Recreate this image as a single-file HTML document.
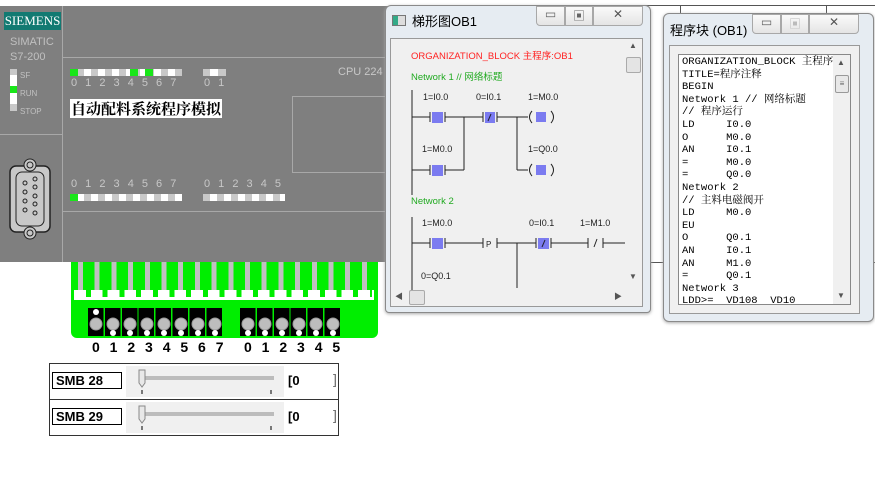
<!DOCTYPE html>
<html><head><meta charset="utf-8"><style>
*{margin:0;padding:0;box-sizing:border-box}
body{width:875px;height:486px;background:#fff;position:relative;overflow:hidden;font-family:"Liberation Sans","Noto Sans CJK SC",sans-serif}
.a{position:absolute}
.led{position:absolute;height:7px}
.dg{position:absolute;color:#c8c8c8;font-size:11px;letter-spacing:0;word-spacing:5px}
.btn{position:absolute;border:1px solid #a8a8a8;background:linear-gradient(#fafafa,#e4e4e4);color:#666;font-size:12px;text-align:center}
.mono{font-family:"Liberation Mono","Noto Serif CJK SC",monospace;font-size:10.5px;line-height:12.6px;color:#000;white-space:pre}
</style></head><body>

<div class="a" style="left:640px;top:5px;width:235px;height:1px;background:#555"></div>
<div class="a" style="left:600px;top:262px;width:275px;height:1px;background:#555"></div>
<div class="a" style="left:680px;top:5px;width:1px;height:10px;background:#555"></div>
<div class="a" style="left:826px;top:5px;width:1px;height:10px;background:#555"></div>

<div class="a" style="left:0;top:6px;width:388px;height:256px;background:#7f7f7f"></div>
<div class="a" style="left:62px;top:6px;width:1px;height:256px;background:#a8a8a8"></div>
<div class="a" style="left:0;top:134px;width:62px;height:1px;background:#a8a8a8"></div>
<div class="a" style="left:63px;top:57px;width:325px;height:1px;background:#a8a8a8"></div>
<div class="a" style="left:63px;top:211px;width:325px;height:1px;background:#a8a8a8"></div>
<div class="a" style="left:292px;top:96px;width:96px;height:77px;border:1px solid #a8a8a8;border-right:none"></div>
<div class="a" style="left:4px;top:12px;width:57px;height:18px;background:#127a72;color:#fff;font-family:'Liberation Serif',serif;font-size:13px;line-height:18px;text-align:center">SIEMENS</div>
<div class="a" style="left:10px;top:35px;color:#c0c0c0;font-size:11px;line-height:15px">SIMATIC<br>S7-200</div>
<div class="a" style="left:10px;top:69px;width:7px;height:42px;background:#fff"></div>
<div class="a" style="left:10px;top:69px;width:7px;height:6px;background:#c8c8c8"></div>
<div class="a" style="left:10px;top:86px;width:7px;height:7px;background:#19e619"></div>
<div class="a" style="left:10px;top:104px;width:7px;height:7px;background:#c8c8c8"></div>
<div class="a" style="left:20px;top:67px;color:#c0c0c0;font-size:8px;line-height:18px">SF<br>RUN<br>STOP</div>
<svg class="a" style="left:8px;top:158px" width="46" height="82"><rect x="2" y="8" width="40" height="66" rx="6" fill="#c8c8c8" stroke="#222" stroke-width="1.5"/><circle cx="22" cy="7" r="6" fill="#c8c8c8" stroke="#222"/><circle cx="22" cy="7" r="3" fill="none" stroke="#222"/><circle cx="22" cy="75" r="6" fill="#c8c8c8" stroke="#222"/><circle cx="22" cy="75" r="3" fill="none" stroke="#222"/><rect x="8" y="14" width="28" height="54" rx="6" fill="#c8c8c8" stroke="#222"/><g fill="none" stroke="#222"><circle cx="17" cy="25" r="2"/><circle cx="17" cy="34" r="2"/><circle cx="17" cy="43" r="2"/><circle cx="17" cy="52" r="2"/><circle cx="27" cy="21" r="2"/><circle cx="27" cy="29" r="2"/><circle cx="27" cy="38" r="2"/><circle cx="27" cy="46" r="2"/><circle cx="27" cy="55" r="2"/></g></svg>

<div class="a" style="left:70px;top:69px;width:112px;height:7px;background:repeating-linear-gradient(90deg,#fff 0 7px,#c8c8c8 7px 14px)"></div>
<div class="led" style="left:70px;top:69px;width:8px;background:#19e619"></div>
<div class="led" style="left:130px;top:69px;width:8px;background:#19e619"></div>
<div class="led" style="left:145px;top:69px;width:8px;background:#19e619"></div>
<div class="a" style="left:203px;top:69px;width:23px;height:7px;background:linear-gradient(90deg,#c8c8c8 0 7px,#fff 7px 15px,#c8c8c8 15px)"></div>
<div class="dg" style="left:71px;top:77px">0 1 2 3 4 5 6 7</div>
<div class="dg" style="left:204px;top:77px">0 1</div>
<div class="a" style="left:338px;top:66px;color:#c8c8c8;font-size:11px">CPU 224</div>
<div class="a" style="left:70px;top:99px;background:#fff;color:#000;font-family:'Noto Serif CJK SC',serif;font-weight:bold;font-size:15px;line-height:19px;padding:0 1px">自动配料系统程序模拟</div>
<div class="dg" style="left:71px;top:178px">0 1 2 3 4 5 6 7</div>
<div class="dg" style="left:204px;top:178px">0 1 2 3 4 5</div>
<div class="a" style="left:70px;top:194px;width:112px;height:7px;background:repeating-linear-gradient(90deg,#c8c8c8 0 7px,#fff 7px 14px)"></div>
<div class="led" style="left:70px;top:194px;width:8px;background:#19e619"></div>
<div class="a" style="left:203px;top:194px;width:82px;height:7px;background:repeating-linear-gradient(90deg,#c8c8c8 0 7px,#fff 7px 14px)"></div>

<div class="a" style="left:71px;top:262px;width:307px;height:76px;background:#00ee00;border-radius:0 0 6px 6px"></div>
<div class="a" style="left:78px;top:262px;width:292px;height:29px;background:repeating-linear-gradient(90deg,#c0c0c0 0 5px,transparent 5px 16.7px)"></div>
<div class="a" style="left:74px;top:290px;width:300px;height:10px;background:#fff"></div>
<div class="a" style="left:86px;top:290px;width:286px;height:7px;background:repeating-linear-gradient(90deg,#00ee00 0 5px,transparent 5px 16.7px)"></div>
<div class="a" style="left:88px;top:308px;width:135px;height:28px;background:repeating-linear-gradient(90deg,#000 0 15.5px,#00ee00 15.5px 16.9px)"></div>
<div class="a" style="left:240px;top:308px;width:101px;height:28px;background:repeating-linear-gradient(90deg,#000 0 15.5px,#00ee00 15.5px 16.9px)"></div>
<svg class="a" style="left:88px;top:308px" width="260" height="28">
<g fill="#bdbdbd" stroke="#999">
<circle cx="8" cy="16" r="6"/><circle cx="25" cy="16" r="6"/><circle cx="42" cy="16" r="6"/><circle cx="59" cy="16" r="6"/><circle cx="76" cy="16" r="6"/><circle cx="93" cy="16" r="6"/><circle cx="110" cy="16" r="6"/><circle cx="127" cy="16" r="6"/>
<circle cx="160" cy="16" r="6"/><circle cx="177" cy="16" r="6"/><circle cx="194" cy="16" r="6"/><circle cx="211" cy="16" r="6"/><circle cx="228" cy="16" r="6"/><circle cx="245" cy="16" r="6"/></g>
<g fill="#fff"><circle cx="8" cy="4" r="3"/><circle cx="25" cy="25" r="3"/><circle cx="42" cy="25" r="3"/><circle cx="59" cy="25" r="3"/><circle cx="76" cy="25" r="3"/><circle cx="93" cy="25" r="3"/><circle cx="110" cy="25" r="3"/><circle cx="127" cy="25" r="3"/><circle cx="160" cy="25" r="3"/><circle cx="177" cy="25" r="3"/><circle cx="194" cy="25" r="3"/><circle cx="211" cy="25" r="3"/><circle cx="228" cy="25" r="3"/><circle cx="245" cy="25" r="3"/></g></svg>
<div class="a" style="left:92px;top:339px;font-weight:bold;font-size:14px;letter-spacing:3px;color:#000">0 1 2 3 4 5 6 7</div>
<div class="a" style="left:244px;top:339px;font-weight:bold;font-size:14px;letter-spacing:3px;color:#000">0 1 2 3 4 5</div>

<div class="a" style="left:49px;top:363px;width:290px;height:73px;border:1px solid #333;background:#fff"></div>
<div class="a" style="left:49px;top:399px;width:290px;height:1px;background:#333"></div>
<div class="a" style="left:52px;top:372px;width:70px;height:17px;border:1px solid #000;font-weight:bold;font-size:13px;line-height:15px;padding-left:3px">SMB 28</div>
<div class="a" style="left:52px;top:408px;width:70px;height:17px;border:1px solid #000;font-weight:bold;font-size:13px;line-height:15px;padding-left:3px">SMB 29</div>
<div class="a" style="left:126px;top:366px;width:158px;height:31px;background:#f0f0f0"></div>
<div class="a" style="left:126px;top:402px;width:158px;height:31px;background:#f0f0f0"></div>
<svg class="a" style="left:126px;top:366px" width="158" height="70">
<g stroke="#888" fill="none"><path d="M18 11H148M18 13H148"/><path d="M18 47H148M18 49H148"/><path d="M13 4V17L16 21L19 17V4Z" fill="#e8e8e8"/><path d="M13 40V53L16 57L19 53V40Z" fill="#e8e8e8"/><path d="M16 24V28M145 24V28M16 60V64M145 60V64" stroke="#000"/></g></svg>
<div class="a" style="left:288px;top:373px;font-weight:bold;font-size:13px">[0</div>
<div class="a" style="left:333px;top:371px;font-size:14px;color:#666">]</div>
<div class="a" style="left:288px;top:409px;font-weight:bold;font-size:13px">[0</div>
<div class="a" style="left:333px;top:407px;font-size:14px;color:#666">]</div>

<div class="a" style="left:385px;top:5px;width:266px;height:308px;background:#e6ecf2;border:1px solid #8a8a8a;border-radius:6px 6px 4px 4px;box-shadow:0 1px 3px #aaa"></div>
<div class="a" style="left:392px;top:15px;width:14px;height:11px;border:1px solid #777;background:linear-gradient(90deg,#3a8 0 5px,#ddd 5px)"></div>
<div class="a" style="left:412px;top:11px;font-size:13px;color:#000">梯形图OB1</div>
<div class="btn" style="left:536px;top:6px;width:29px;height:20px;border-radius:0 0 0 4px">▭</div>
<div class="btn" style="left:565px;top:6px;width:28px;height:20px">▣</div>
<div class="btn" style="left:593px;top:6px;width:50px;height:20px;border-radius:0 0 4px 0;color:#555">✕</div>
<div class="a" style="left:390px;top:38px;width:253px;height:269px;background:#f0f0f0;border:1px solid #999"></div>
<div class="a" style="left:625px;top:39px;width:17px;height:249px;background:#f0f0f0"></div>
<div class="a" style="left:626px;top:57px;width:15px;height:16px;background:#e4e4e4;border:1px solid #aaa;border-radius:2px"></div>
<div class="a" style="left:629px;top:41px;font-size:8px;color:#555">▲</div>
<div class="a" style="left:629px;top:272px;font-size:8px;color:#555">▼</div>
<div class="a" style="left:409px;top:290px;width:16px;height:15px;background:#e4e4e4;border:1px solid #aaa;border-radius:2px"></div>
<div class="a" style="left:395px;top:291px;font-size:8px;color:#555">◀</div>
<div class="a" style="left:614px;top:291px;font-size:8px;color:#555">▶</div>
<div class="a" style="left:411px;top:48px;color:#f22;font-size:9.5px">ORGANIZATION_BLOCK 主程序:OB1</div>
<div class="a" style="left:411px;top:69px;color:#2a2;font-size:9.5px">Network 1 // 网络标题</div>
<div class="a" style="left:411px;top:196px;color:#2a2;font-size:9.5px">Network 2</div>
<svg class="a" style="left:0;top:0" width="625" height="290" font-family="Liberation Sans" font-size="9" fill="#222">
<g stroke="#222" stroke-width="1" fill="none">
<path d="M412 90V195M412 217V290"/>
<path d="M412 117H430M430 112V122M445 112V122M445 117H483M483 112V122M497 112V122M497 117H528M464 117V170M517 117V170M412 170H430M430 165V175M445 165V175M445 170H464M517 170H528"/>
<path d="M412 243H430M430 238V248M445 238V248M445 243H483M483 238V248M497 238V248M497 243H536M536 238V248M551 238V248M551 243H588M588 238V248M603 238V248M603 243H625M517 243V288"/>
<path d="M532 111Q527 117 532 123M551 111Q556 117 551 123M532 164Q527 170 532 176M551 164Q556 170 551 176"/>
<path d="M597 239L594 247"/>
</g>
<g fill="#7b7bf0"><rect x="432" y="112" width="11" height="11"/><rect x="485" y="112" width="10" height="11"/><rect x="536" y="112" width="10" height="10"/><rect x="432" y="165" width="11" height="11"/><rect x="536" y="165" width="10" height="10"/><rect x="432" y="238" width="11" height="11"/><rect x="538" y="238" width="11" height="11"/></g>
<path d="M491 114L488 121M545 240L542 247" stroke="#223" fill="none"/>
<text x="423" y="100">1=I0.0</text><text x="476" y="100">0=I0.1</text><text x="528" y="100">1=M0.0</text>
<text x="422" y="152">1=M0.0</text><text x="528" y="152">1=Q0.0</text>
<text x="422" y="226">1=M0.0</text><text x="529" y="226">0=I0.1</text><text x="580" y="226">1=M1.0</text>
<text x="486" y="247" font-size="8">P</text>
<text x="421" y="279">0=Q0.1</text>
</svg>

<div class="a" style="left:663px;top:13px;width:211px;height:309px;background:#e6ecf2;border:1px solid #8a8a8a;border-radius:6px;box-shadow:0 1px 3px #aaa"></div>
<div class="a" style="left:670px;top:20px;font-size:13px;color:#000">程序块 (OB1)</div>
<div class="btn" style="left:752px;top:14px;width:29px;height:20px;border-radius:0 0 0 4px">▭</div>
<div class="btn" style="left:781px;top:14px;width:28px;height:20px;color:#bbb">▣</div>
<div class="btn" style="left:809px;top:14px;width:50px;height:20px;border-radius:0 0 4px 0;color:#555">✕</div>
<div class="a" style="left:669px;top:45px;width:191px;height:269px;background:#f0f0f0;border:1px solid #999"></div>
<div class="a" style="left:678px;top:54px;width:173px;height:251px;background:#fff;border:1px solid #888;overflow:hidden">
<div class="mono" style="position:absolute;left:3px;top:1px">ORGANIZATION_BLOCK 主程序
TITLE=程序注释
BEGIN
Network 1 // 网络标题
// 程序运行
LD     I0.0
O      M0.0
AN     I0.1
=      M0.0
=      Q0.0
Network 2
// 主料电磁阀开
LD     M0.0
EU
O      Q0.1
AN     I0.1
AN     M1.0
=      Q0.1
Network 3
LDD>=  VD108  VD10</div>
<div class="a" style="left:154px;top:0;width:18px;height:250px;background:#f0f0f0"></div>
<div class="a" style="left:156px;top:20px;width:14px;height:18px;background:#e8e8e8;border:1px solid #999;border-radius:2px;font-size:8px;text-align:center;line-height:15px;color:#666">≡</div>
<div class="a" style="left:158px;top:3px;font-size:8px;color:#555">▲</div>
<div class="a" style="left:158px;top:236px;font-size:8px;color:#555">▼</div>
</div>
</body></html>
